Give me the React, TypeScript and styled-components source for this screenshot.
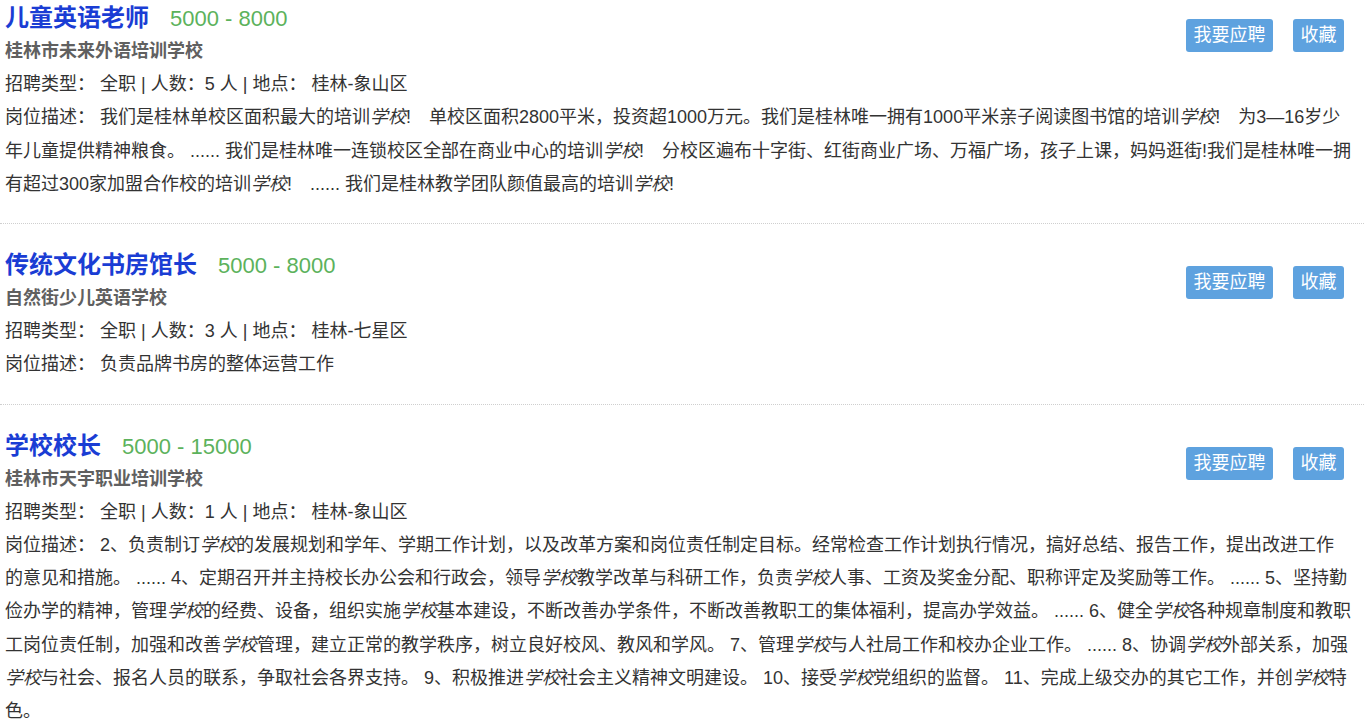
import React from "react";
import styled, { createGlobalStyle } from "styled-components";

const GlobalStyle = createGlobalStyle`
  html, body {
    margin: 0;
    padding: 0;
    background: #ffffff;
  }
  body {
    overflow: hidden;
    font-family: "Liberation Sans", "Noto Sans CJK SC", sans-serif;
    color: #333333;
  }
`;

const List = styled.ul`
  list-style: none;
  margin: 0;
  padding: 0;
  width: 1364px;
`;

const Item = styled.li<{ $first?: boolean }>`
  padding: ${(p) => (p.$first ? "0" : "23px")} 13px 22px 5px;
  border-bottom: 1px dotted #cfcfcf;
`;

const Head = styled.div`
  display: flex;
  justify-content: space-between;
  align-items: flex-start;
`;

const Info = styled.div`
  display: flex;
  flex-direction: column;
`;

const TitleRow = styled.div`
  display: flex;
  align-items: baseline;
  gap: 21px;
  height: 35px;
  line-height: 35px;
`;

const Title = styled.h3`
  margin: 0;
  font-size: 24px;
  font-weight: bold;
  color: #1a3dd4;
`;

const Salary = styled.span`
  font-size: 22px;
  color: #5cb25c;
`;

const Company = styled.div`
  font-size: 18px;
  font-weight: bold;
  line-height: 33.2px;
  color: #606060;
`;

const Line = styled.div`
  font-size: 18px;
  line-height: 33.2px;
  color: #333333;
`;

const Em = styled.em`
  font-style: italic;
`;

const Actions = styled.div`
  display: flex;
  gap: 20px;
  margin-top: 19px;
  margin-right: 7px;
`;

const Button = styled.button`
  height: 33px;
  padding: 0 7.5px;
  border: none;
  border-radius: 3px;
  background: #5ea2df;
  color: #ffffff;
  font-family: inherit;
  font-size: 18px;
  line-height: 33px;
  cursor: pointer;
`;

type Job = {
  title: string;
  salary: string;
  company: string;
  count: number;
  place: string;
  desc: string;
};

const jobs: Job[] = [
  {
    title: "儿童英语老师",
    salary: "5000 - 8000",
    company: "桂林市未来外语培训学校",
    count: 5,
    place: "桂林-象山区",
    desc:
      "我们是桂林单校区面积最大的培训学校!\u2003单校区面积2800平米，投资超1000万元。我们是桂林唯一拥有1000平米亲子阅读图书馆的培训学校!\u2003为3—16岁少年儿童提供精神粮食。 ...... 我们是桂林唯一连锁校区全部在商业中心的培训学校!\u2003分校区遍布十字街、红街商业广场、万福广场，孩子上课，妈妈逛街!我们是桂林唯一拥有超过300家加盟合作校的培训学校!\u2003...... 我们是桂林教学团队颜值最高的培训学校!",
  },
  {
    title: "传统文化书房馆长",
    salary: "5000 - 8000",
    company: "自然街少儿英语学校",
    count: 3,
    place: "桂林-七星区",
    desc: "负责品牌书房的整体运营工作",
  },
  {
    title: "学校校长",
    salary: "5000 - 15000",
    company: "桂林市天宇职业培训学校",
    count: 1,
    place: "桂林-象山区",
    desc:
      "2、负责制订学校的发展规划和学年、学期工作计划，以及改革方案和岗位责任制定目标。经常检查工作计划执行情况，搞好总结、报告工作，提出改进工作的意见和措施。 ...... 4、定期召开并主持校长办公会和行政会，领导学校教学改革与科研工作，负责学校人事、工资及奖金分配、职称评定及奖励等工作。 ...... 5、坚持勤俭办学的精神，管理学校的经费、设备，组织实施学校基本建设，不断改善办学条件，不断改善教职工的集体福利，提高办学效益。 ...... 6、健全学校各种规章制度和教职工岗位责任制，加强和改善学校管理，建立正常的教学秩序，树立良好校风、教风和学风。 7、管理学校与人社局工作和校办企业工作。 ...... 8、协调学校外部关系，加强学校与社会、报名人员的联系，争取社会各界支持。 9、积极推进学校社会主义精神文明建设。 10、接受学校党组织的监督。 11、完成上级交办的其它工作，并创学校特色。",
  },
];

function highlight(text: string) {
  const parts = text.split("学校");
  return parts.map((part, i) => (
    <React.Fragment key={i}>
      {part}
      {i < parts.length - 1 && <Em>学校</Em>}
    </React.Fragment>
  ));
}

export default function App() {
  return (
    <>
      <GlobalStyle />
      <List>
        {jobs.map((job, i) => (
          <Item key={job.title} $first={i === 0}>
            <Head>
              <Info>
                <TitleRow>
                  <Title>{job.title}</Title>
                  <Salary>{job.salary}</Salary>
                </TitleRow>
                <Company>{job.company}</Company>
                <Line>
                  招聘类型： 全职 | 人数：{job.count} 人 | 地点： {job.place}
                </Line>
              </Info>
              <Actions>
                <Button>我要应聘</Button>
                <Button>收藏</Button>
              </Actions>
            </Head>
            <Line>岗位描述： {highlight(job.desc)}</Line>
          </Item>
        ))}
      </List>
    </>
  );
}
